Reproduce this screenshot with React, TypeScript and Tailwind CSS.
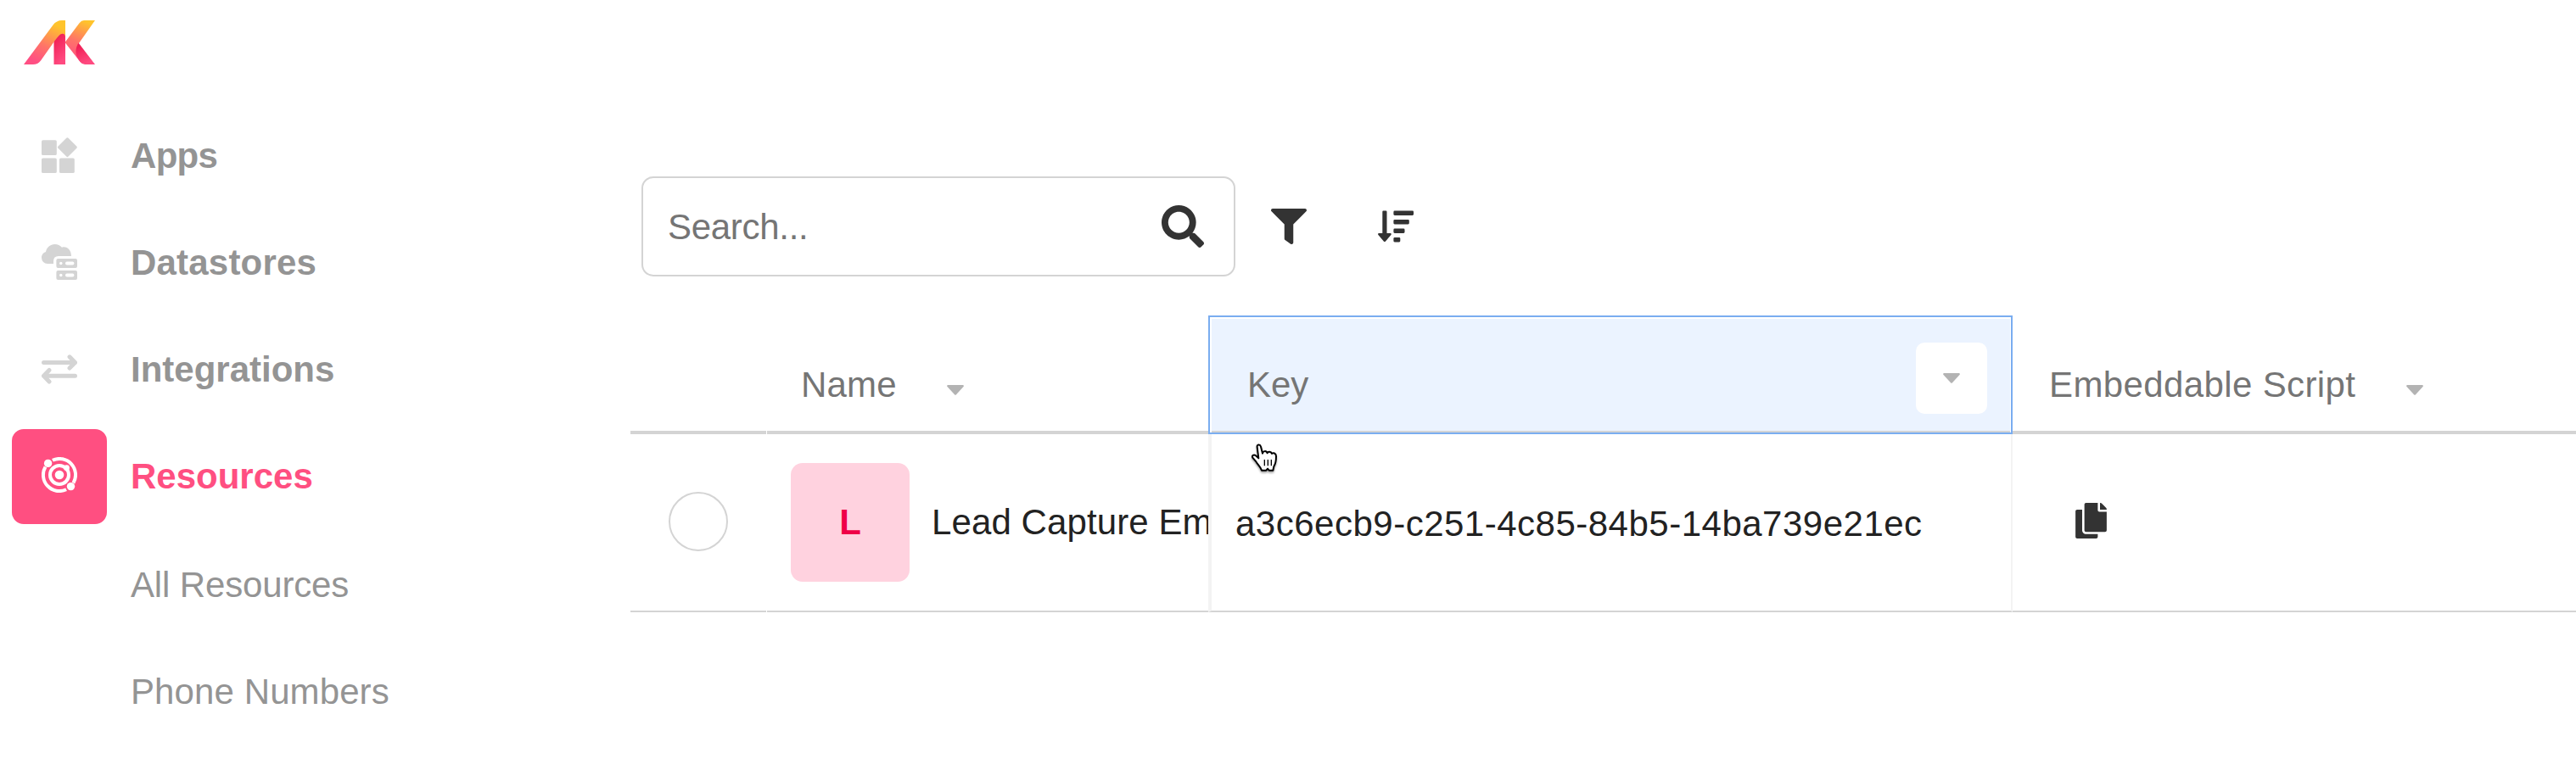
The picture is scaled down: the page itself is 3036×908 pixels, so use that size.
import type { ReactNode } from "react";
import { FaCopy, FaFilter, FaSearch } from "react-icons/fa";

function Logo() {
  return (
    <svg width="84" height="52" viewBox="0 0 84 52">
      <defs>
        <linearGradient id="warm" x1="0.75" y1="0" x2="0.3" y2="1">
          <stop offset="0.08" stopColor="#ffc42c" />
          <stop offset="0.58" stopColor="#ff7468" />
          <stop offset="0.95" stopColor="#ff4f83" />
        </linearGradient>
        <linearGradient id="warmRight" x1="0.8" y1="0" x2="0.5" y2="1">
          <stop offset="0.05" stopColor="#ffc42c" />
          <stop offset="0.55" stopColor="#ff7468" />
          <stop offset="1" stopColor="#ff4f83" />
        </linearGradient>
        <linearGradient id="red" x1="0" y1="0" x2="0.4" y2="1">
          <stop offset="0.2" stopColor="#f01f55" />
          <stop offset="1" stopColor="#ff4a80" />
        </linearGradient>
      </defs>
      <path d="M35.5 52V22L40 14H49V52Z" fill="url(#red)" />
      <path d="M0 52L34.500 5.500Q38.500 0 45 0H49V19C48.500 15 44.500 14.500 41.500 18C39 20.500 37 23.500 35.500 25.500L20 47.500Q16.500 52 11 52Z" fill="url(#warm)" />
      <path d="M84 0H71Q68 0 65.500 3.200L48.500 26L65 47Q67 49.500 69 51Q59 38 65 27Z" fill="url(#warmRight)" />
      <path d="M64.500 26.500L84 52H72Q69 52 66.500 49Q57.500 38 64.500 26.500Z" fill="url(#red)" />
    </svg>
  );
}

function AppsIcon() {
  return (
    <svg width="42" height="42" viewBox="0 0 42 42" fill="#d4d4d4">
      <rect y="3.200" width="17.800" height="17.800" rx="1.600" />
      <rect y="24.400" width="17.800" height="17.600" rx="1.600" />
      <rect x="21" y="24.400" width="17.800" height="17.600" rx="1.600" />
      <rect x="21.900" y="3.200" width="17" height="17" rx="1.600" transform="rotate(45 30.400 11.700)" />
    </svg>
  );
}

function DatastoresIcon() {
  return (
    <svg width="42" height="42" viewBox="0 0 42 42">
      <path
        d="M7 23A6.900 7 0 0 1 0 16Q0 10.500 5 9C6 3.500 10.500 0 15.500 0C19 0 22 1.500 24 3.800C29.500 1.800 35 6.500 35 14H20Q14 14 14 20V23Z"
        fill="#d4d4d4"
      />
      <rect x="17.400" y="17" width="24.600" height="11" rx="2" fill="#d4d4d4" />
      <rect x="17.400" y="31" width="24.600" height="11" rx="2" fill="#d4d4d4" />
      <circle cx="22.800" cy="22.500" r="1.700" fill="#fff" />
      <circle cx="22.800" cy="36.500" r="1.700" fill="#fff" />
      <rect x="28" y="20.600" width="10.400" height="3.800" rx="1.900" fill="#fff" />
      <rect x="28" y="34.600" width="10.400" height="3.800" rx="1.900" fill="#fff" />
    </svg>
  );
}

function IntegrationsIcon() {
  return (
    <svg
      width="42"
      height="35"
      viewBox="0 0 42 35"
      fill="none"
      stroke="#d4d4d4"
      strokeWidth="5"
      strokeLinecap="round"
      strokeLinejoin="round"
    >
      <path d="M2.500 9.500H39.500M33 2.800L39.500 9.500L33 16" />
      <path d="M39.500 25.200H2.500M9 18.500L2.500 25.200L9 32" />
    </svg>
  );
}

function ResourcesIcon() {
  return (
    <svg width="42" height="42" viewBox="0 0 42 42" fill="none" stroke="#fff" strokeWidth="4">
      <path d="M12.900 3.800A19 19 0 0 1 37.500 30.500" />
      <path d="M29.100 38.200A19 19 0 0 1 4.500 11.500" />
      <circle cx="21" cy="21" r="11" />
      <circle cx="21" cy="21" r="5.300" fill="#fff" stroke="none" />
      <circle cx="7.600" cy="7.400" r="4.700" fill="#fff" stroke="none" />
      <circle cx="34.500" cy="34.600" r="4.700" fill="#fff" stroke="none" />
      <circle cx="29.500" cy="12.700" r="3.400" fill="#fff" stroke="none" />
    </svg>
  );
}

function SortIcon() {
  return (
    <svg width="42" height="42" viewBox="0 0 42 42" fill="#333333" className="ml-[84px]">
      <path d="M5.300 3.700Q5.300 2.600 6.400 2.600H9.400Q10.500 2.600 10.500 3.700V28.900H14.600Q16.400 29.200 15.400 31L8.800 38.700Q7.900 39.500 7 38.700L0.400 31Q-0.600 29.200 1.200 28.900H5.300Z" />
      <rect x="18.400" y="2.600" width="23.600" height="5.300" rx="1.300" />
      <rect x="18.400" y="13.100" width="18.400" height="5.300" rx="1.300" />
      <rect x="18.400" y="23.600" width="13.100" height="5.300" rx="1.300" />
      <rect x="18.400" y="34.100" width="7.900" height="5.300" rx="1.300" />
    </svg>
  );
}

function Caret() {
  return (
    <svg width="20" height="12" viewBox="0 0 20 12" fill="#b3b3b3">
      <path d="M1 0H19Q20.500 0.600 19.500 1.900L11 11.200Q10 12.200 9 11.200L0.500 1.900Q-0.500 0.600 1 0Z" />
    </svg>
  );
}

function HandCursor() {
  return (
    <svg width="52" height="52" viewBox="0 0 156 156" className="drop-shadow-[0_2px_1px_rgba(0,0,0,0.35)]">
      <path
        d="M50 40C48 30 60 28 63 38L69 62C71 52 83 52 86 61C88 54 99 54 102 63C106 58 117 61 117 72C117 90 116 98 109 108L106 122H92L87 116L82 122H66C61 108 51 101 46 91L34 77C30 70 38 64 45 70L55 79Z"
        fill="#fff"
        stroke="#000"
        strokeWidth="6"
        strokeLinejoin="round"
      />
      <path d="M76 84V106M88 84V106M100 84V106" stroke="#000" strokeWidth="4" />
    </svg>
  );
}

function NavItem({ icon, label, active = false, tracking }: { icon: ReactNode; label: string; active?: boolean; tracking: string }) {
  return (
    <a className="flex h-[126px] items-center">
      <span
        className={
          active
            ? "mt-[2px] flex h-28 w-28 items-center justify-center rounded-[14px] bg-[#ff4f81] pb-1"
            : "flex h-28 w-28 items-center justify-center"
        }
      >
        {icon}
      </span>
      <span className={`ml-7 pt-[2px] font-bold ${tracking} ${active ? "text-[#ff4f81]" : "text-[#949494]"}`}>{label}</span>
    </a>
  );
}

export default function App() {
  return (
    <div className="flex h-[908px] w-[3036px] overflow-hidden bg-white font-['Liberation_Sans',Arial,sans-serif] text-[42px] leading-[48px]">
      <aside className="w-[743px] shrink-0 pl-[14px]">
        <div className="h-[120px] pt-6 pl-[14px]">
          <Logo />
        </div>
        <nav>
          <NavItem icon={<AppsIcon />} label="Apps" tracking="tracking-[-0.7px]" />
          <NavItem icon={<DatastoresIcon />} label="Datastores" tracking="tracking-[0.2px]" />
          <NavItem icon={<IntegrationsIcon />} label="Integrations" tracking="tracking-normal" />
          <NavItem icon={<ResourcesIcon />} label="Resources" active tracking="tracking-normal" />
          <div className="flex h-[126px] items-center pt-[6px] pl-[140px] tracking-[-0.15px] text-[#949494]">All Resources</div>
          <div className="flex h-[126px] items-center pt-[6px] pl-[140px] tracking-[0.1px] text-[#949494]">Phone Numbers</div>
        </nav>
      </aside>

      <main className="min-w-0 flex-1 pt-[208px]">
        <div className="flex h-[118px] items-center pl-[13px]">
          <div className="flex h-[118px] w-[700px] items-center justify-between rounded-[14px] border-2 border-[#d4d4d4] pr-[35px] pl-[29px] text-[#757575]">
            <span className="pt-[2px] tracking-[-0.3px]">Search...</span>
            <FaSearch className="h-[50px] w-[50px] text-[#333333]" />
          </div>
          <FaFilter className="ml-[42px] h-[42px] w-[42px] text-[#333333]" />
          <SortIcon />
        </div>

        <div className="mt-[46px] grid grid-cols-[160px_521px_948px_1fr] text-[#757575]">
          <div className="h-[140px] border-b-4 border-[#d4d4d4]" />
          <div className="ml-px flex h-[140px] items-start border-b-4 border-[#d4d4d4] pt-[58px] pl-[40px]">
            <span className="tracking-[0.2px]">Name</span>
            <span className="mt-6 ml-[59px]">
              <Caret />
            </span>
          </div>
          <div className="h-[140px] border-2 border-[#7aadf0] pt-[2px] pr-px pl-[2px]">
            <div className="flex h-[134px] items-start justify-between border-b-2 border-[#d4d4d4] bg-[#ebf3ff] pr-[27px] pl-[42px]">
              <span className="pt-[54px]">Key</span>
              <span className="mt-[28px] flex h-[84px] w-[84px] items-center justify-center rounded-[10px] bg-white">
                <Caret />
              </span>
            </div>
          </div>
          <div className="flex h-[140px] items-start border-b-4 border-[#d4d4d4] pt-[58px] pl-[43px]">
            <span className="tracking-[0.38px]">Embeddable Script</span>
            <span className="mt-6 ml-[60px]">
              <Caret />
            </span>
          </div>

          <div className="flex h-[210px] items-center border-b-2 border-[#d4d4d4] pl-[45px]">
            <span className="mt-[-2px] h-[70px] w-[70px] rounded-full border-2 border-[#d4d4d4]" />
          </div>
          <div className="ml-px flex h-[210px] items-center overflow-hidden border-b-2 border-[#d4d4d4] pl-[28px] text-[#222222]">
            <span className="flex h-[140px] w-[140px] shrink-0 items-center justify-center rounded-[14px] bg-[#ffd2df] font-bold text-[#ef0047]">
              L
            </span>
            <span className="ml-[26px] tracking-[0.1px] whitespace-nowrap">Lead Capture Em</span>
          </div>
          <div className="relative flex h-[210px] items-center border-r-2 border-b-2 border-l-4 border-r-[#f3f3f3] border-b-[#d4d4d4] border-l-[#f3f3f3] pt-[4px] pl-[28px] text-[#222222]">
            <span className="tracking-[0.5px] whitespace-nowrap">a3c6ecb9-c251-4c85-84b5-14ba739e21ec</span>
            <span className="absolute top-[2px] left-[37px]">
              <HandCursor />
            </span>
          </div>
          <div className="flex h-[210px] items-center border-b-2 border-[#d4d4d4] pl-[74px] text-[#333333]">
            <FaCopy className="mt-[-4px] h-[42px] w-[37px]" />
          </div>
        </div>
      </main>
    </div>
  );
}
